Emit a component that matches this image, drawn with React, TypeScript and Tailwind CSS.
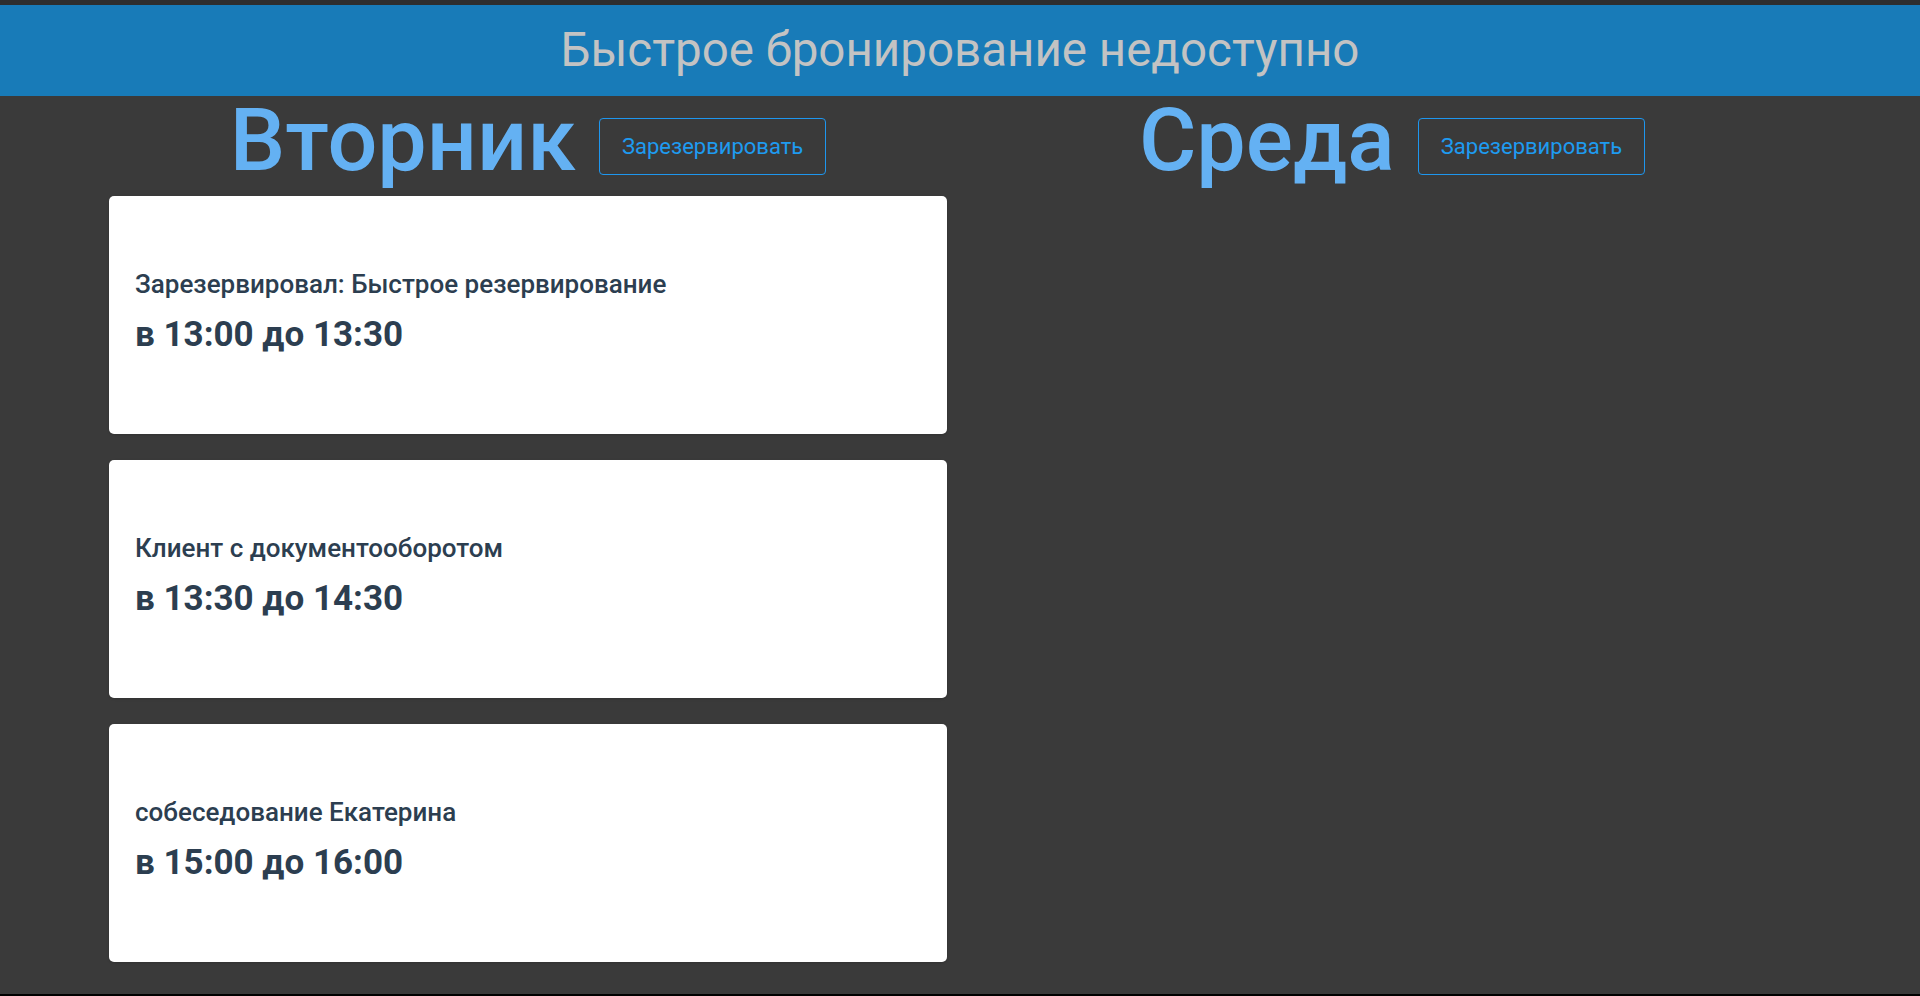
const days = [
  {
    name: "Вторник",
    bookings: [
      { title: "Зарезервировал: Быстрое резервирование", time: "в 13:00 до 13:30" },
      { title: "Клиент с документооборотом", time: "в 13:30 до 14:30" },
      { title: "собеседование Екатерина", time: "в 15:00 до 16:00" },
    ],
  },
  { name: "Среда", bookings: [] as { title: string; time: string }[] },
];

function BookingCard({ title, time }: { title: string; time: string }) {
  return (
    <div className="h-[238px] rounded-[5px] bg-white px-[26px] pt-[73px] text-[#2c3e50] shadow-sm">
      <div className="text-[26px] leading-[30px] font-medium">{title}</div>
      <div className="mt-[15px] text-[35px] leading-[41px] font-bold">{time}</div>
    </div>
  );
}

export default function App() {
  return (
    <div className="min-h-screen flex flex-col bg-[#3a3a3a] font-['Roboto','Liberation_Sans',sans-serif]">
      <div className="h-[5px] bg-[#2e2e2e]" />
      <header className="h-[91px] bg-[#187bb8] flex items-center justify-center">
        <h1 className="text-[47.5px] text-[#c3c3c3]">Быстрое бронирование недоступно</h1>
      </header>

      <main className="flex-1 mx-auto w-[1728px] grid grid-cols-2">
        {days.map((day) => (
          <section key={day.name} className="px-[13px]">
            {/* Day title */}
            <div className="h-[100px] flex items-center justify-center gap-[23px]">
              <h2 className="mb-[12px] text-[88px] leading-none font-medium text-[#64b1f3]">{day.name}</h2>
              <button className="h-[57px] px-[22px] rounded-[4px] border border-[#1e96ee] text-[22px] text-[#1e9bf0]">
                Зарезервировать
              </button>
            </div>

            {/* Bookings */}
            <div className="flex flex-col gap-[26px]">
              {day.bookings.map((b) => (
                <BookingCard key={b.time} title={b.title} time={b.time} />
              ))}
            </div>
          </section>
        ))}
      </main>

      <div className="h-[2px] bg-black" />
    </div>
  );
}
